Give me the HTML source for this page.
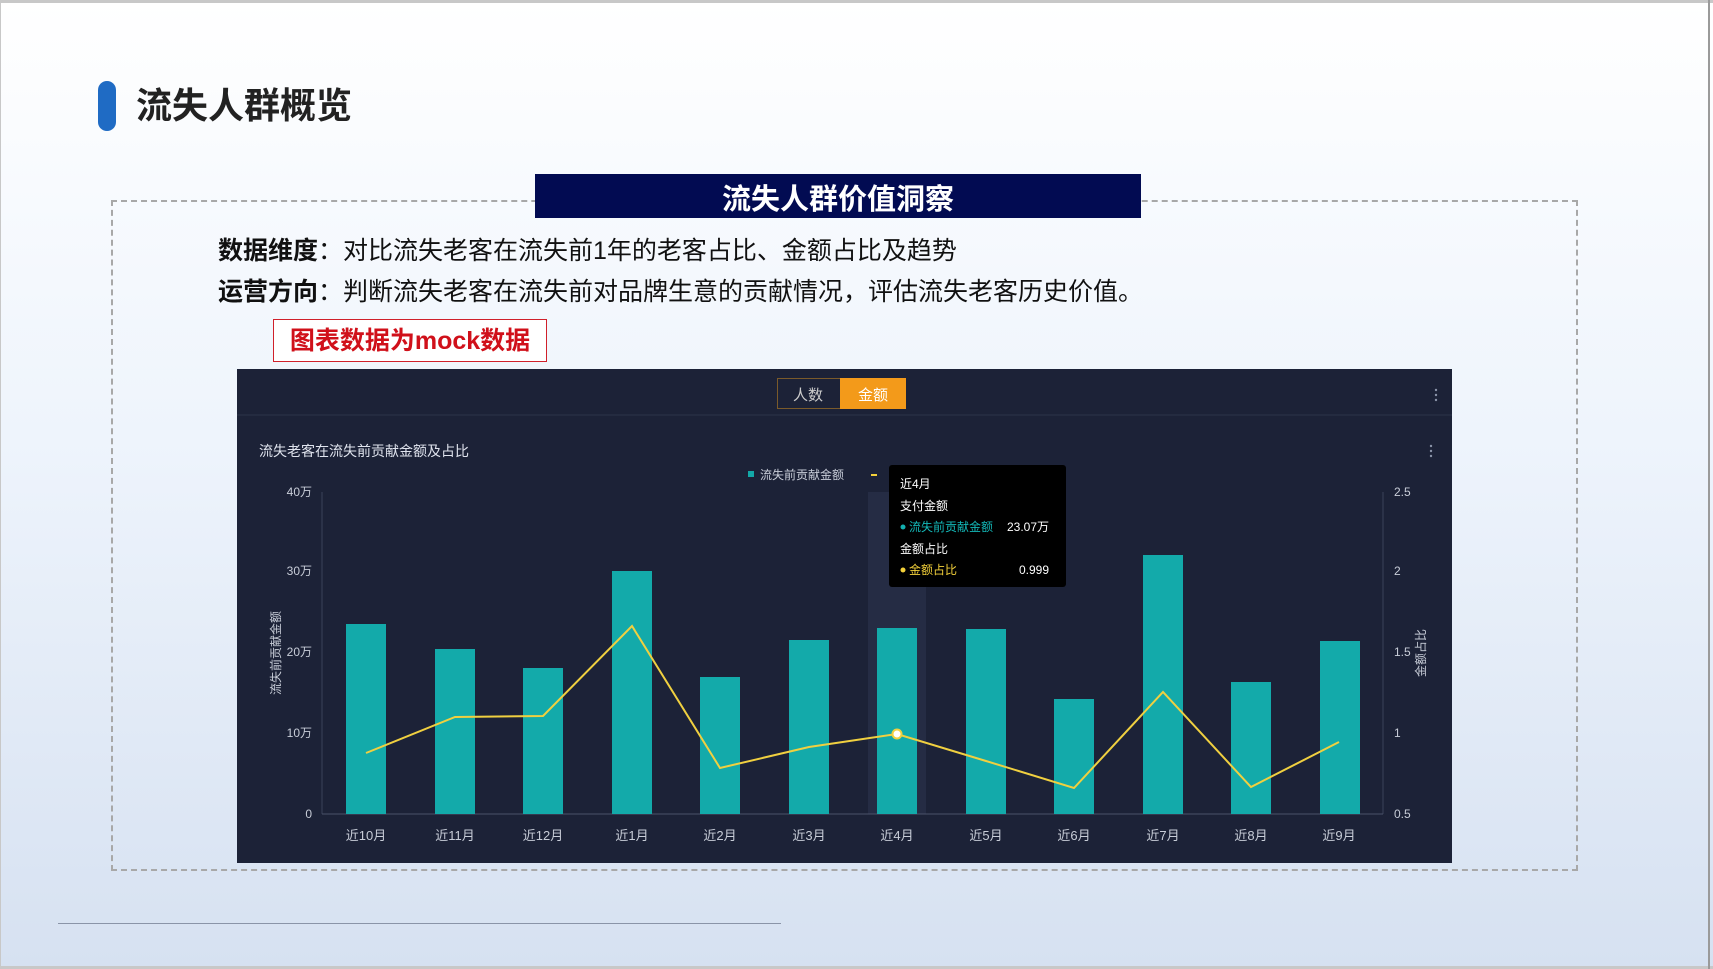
<!DOCTYPE html>
<html><head><meta charset="utf-8"><style>
*{margin:0;padding:0;box-sizing:border-box}
body{width:1713px;height:969px;overflow:hidden;position:relative;font-family:"Liberation Sans","Noto Sans CJK SC",sans-serif;background:linear-gradient(180deg,#ffffff 0%,#eef4fc 45%,#d6e1f1 100%)}
.abs{position:absolute}
</style></head><body>
<div class="abs" style="left:0;top:0;width:1713px;height:3px;background:#c8c8c8"></div>
<div class="abs" style="left:0;top:966px;width:1713px;height:3px;background:#c8c8c8"></div>
<div class="abs" style="left:0;top:0;width:1px;height:969px;background:#c8c8c8"></div>
<div class="abs" style="left:1708px;top:0;width:2px;height:969px;background:#9a9a9a"></div>
<div class="abs" style="left:98px;top:81px;width:18px;height:50px;border-radius:9px;background:#1f6bc4"></div>
<div class="abs" style="left:136px;top:84px;font-size:36px;font-weight:bold;color:#222;line-height:44px">流失人群概览</div>
<div class="abs" style="left:111px;top:200px;width:1467px;height:671px;border:2px dashed #a8a8a8"></div>
<div class="abs" style="left:535px;top:174px;width:606px;height:44px;background:#020b52;color:#fff;font-size:29px;font-weight:bold;text-align:center;line-height:44px;padding-top:8px;line-height:36px">流失人群价值洞察</div>
<div class="abs" style="left:218px;top:235px;font-size:25px;color:#111;line-height:32px"><b>数据维度</b>：对比流失老客在流失前1年的老客占比、金额占比及趋势</div>
<div class="abs" style="left:218px;top:276px;font-size:25px;color:#111;line-height:32px"><b>运营方向</b>：判断流失老客在流失前对品牌生意的贡献情况，评估流失老客历史价值。</div>
<div class="abs" style="left:273px;top:319px;width:274px;height:43px;border:1.5px solid #d0202a;background:#fff;color:#d0101a;font-size:25px;font-weight:bold;text-align:center;line-height:42px">图表数据为mock数据</div>
<div class="abs" style="left:237px;top:369px;width:1215px;height:494px;background:#1c2237"></div>
<svg class="abs" style="left:0;top:0" width="1713" height="969">
<g font-family="Liberation Sans,Noto Sans CJK SC,sans-serif">
<rect x="777.5" y="378.5" width="128" height="30" fill="none" stroke="#7a5a2a"/>
<rect x="840" y="378" width="66" height="31" fill="#f39a1a"/>
<text x="808" y="400" fill="#ccc" font-size="15" text-anchor="middle">人数</text>
<text x="873" y="400" fill="#fff" font-size="15" text-anchor="middle">金额</text>
<line x1="237" y1="415" x2="1452" y2="415" stroke="#2c344a"/>
<g fill="#8a93a8"><circle cx="1436" cy="390" r="1.2"/><circle cx="1436" cy="395" r="1.2"/><circle cx="1436" cy="400" r="1.2"/>
<circle cx="1431" cy="446" r="1.2"/><circle cx="1431" cy="451" r="1.2"/><circle cx="1431" cy="456" r="1.2"/></g>
<text x="259" y="456" fill="#e0e4ee" font-size="14">流失老客在流失前贡献金额及占比</text>
<rect x="748" y="471" width="6" height="6" fill="#13a8a8"/>
<text x="760" y="479" fill="#c8cdd8" font-size="12">流失前贡献金额</text>
<rect x="871" y="474" width="6" height="2" fill="#f3d03a"/>
<rect x="868" y="492" width="58" height="322" fill="#252c44"/>
<line x1="322" y1="492" x2="322" y2="814" stroke="#3a4258"/>
<line x1="1383" y1="492" x2="1383" y2="814" stroke="#3a4258"/>
<line x1="322" y1="814" x2="1383" y2="814" stroke="#4a526a"/>
<g fill="#c8cdd8" font-size="12" text-anchor="end">
<text x="312" y="496">40万</text><text x="312" y="575">30万</text><text x="312" y="656">20万</text><text x="312" y="737">10万</text><text x="312" y="818">0</text></g>
<g fill="#c8cdd8" font-size="12">
<text x="1394" y="496">2.5</text><text x="1394" y="575">2</text><text x="1394" y="656">1.5</text><text x="1394" y="737">1</text><text x="1394" y="818">0.5</text></g>
<text transform="translate(280,653) rotate(-90)" fill="#c8cdd8" font-size="12" text-anchor="middle">流失前贡献金额</text>
<text transform="translate(1425,653) rotate(-90)" fill="#c8cdd8" font-size="12" text-anchor="middle">金额占比</text>
<g fill="#13aaaa">
<rect x="346" y="624" width="40" height="190"/><rect x="435" y="649" width="40" height="165"/><rect x="523" y="668" width="40" height="146"/><rect x="612" y="571" width="40" height="243"/><rect x="700" y="677" width="40" height="137"/><rect x="789" y="640" width="40" height="174"/><rect x="877" y="628" width="40" height="186"/><rect x="966" y="629" width="40" height="185"/><rect x="1054" y="699" width="40" height="115"/><rect x="1143" y="555" width="40" height="259"/><rect x="1231" y="682" width="40" height="132"/><rect x="1320" y="641" width="40" height="173"/></g>
<polyline fill="none" stroke="#f0d040" stroke-width="2" points="366,753 455,717 543,716 632,626 720,768 809,747 897,734 986,761 1074,788 1163,692 1251,787 1339,742"/>
<circle cx="897" cy="734" r="4.5" fill="#fff" stroke="#f0d040" stroke-width="2"/>
<g fill="#c8cdd8" font-size="13" text-anchor="middle">
<text x="366" y="840">近10月</text><text x="455" y="840">近11月</text><text x="543" y="840">近12月</text><text x="632" y="840">近1月</text><text x="720" y="840">近2月</text><text x="809" y="840">近3月</text><text x="897" y="840">近4月</text><text x="986" y="840">近5月</text><text x="1074" y="840">近6月</text><text x="1163" y="840">近7月</text><text x="1251" y="840">近8月</text><text x="1339" y="840">近9月</text></g>
<rect x="889" y="465" width="177" height="122" rx="3" fill="#000"/>
<g font-size="12">
<text x="900" y="488" fill="#fff">近4月</text>
<text x="900" y="510" fill="#fff">支付金额</text>
<circle cx="903" cy="527" r="2.5" fill="#13b0b0"/><text x="909" y="531" fill="#13b8b8">流失前贡献金额</text><text x="1049" y="531" fill="#fff" text-anchor="end">23.07万</text>
<text x="900" y="553" fill="#fff">金额占比</text>
<circle cx="903" cy="570" r="2.5" fill="#f3d03a"/><text x="909" y="574" fill="#f3d03a">金额占比</text><text x="1049" y="574" fill="#fff" text-anchor="end">0.999</text>
</g></g>
<line x1="58" y1="923.5" x2="781" y2="923.5" stroke="#8a94a8"/>
</svg>
</body></html>
